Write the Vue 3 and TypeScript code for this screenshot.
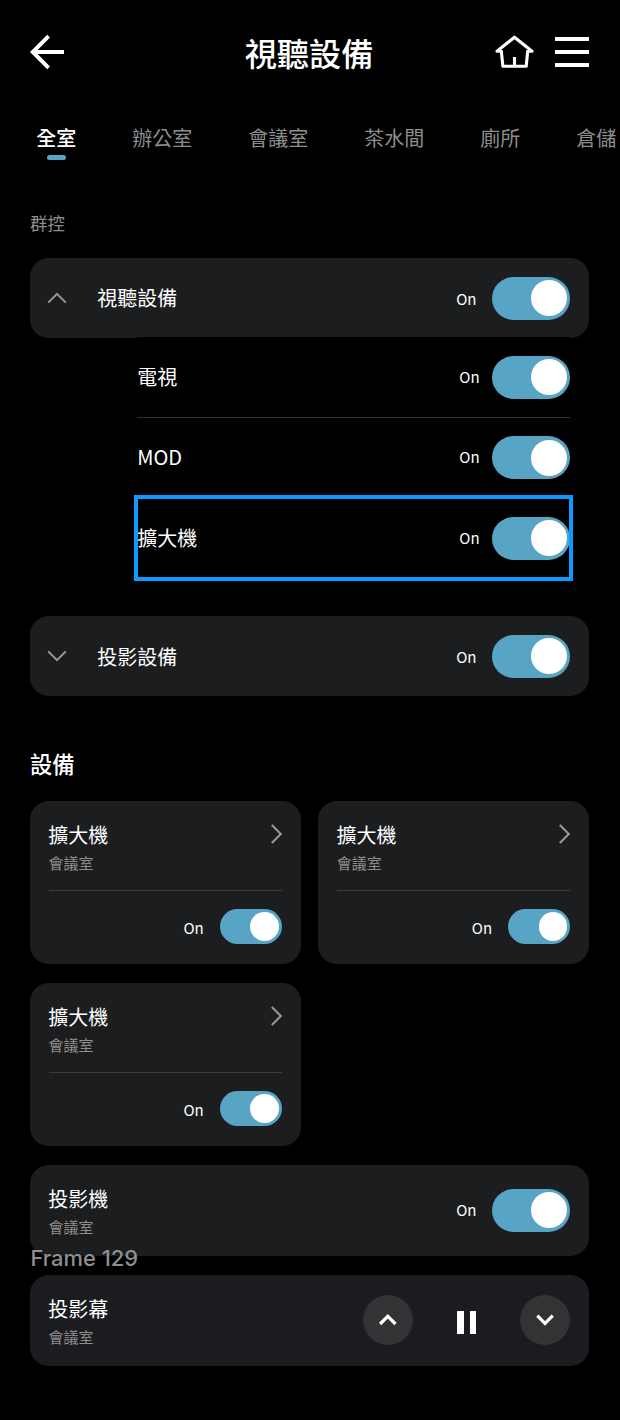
<script setup lang="ts">
import { ref } from 'vue'

interface Switchable {
  id: string
  name: string
  room?: string
  on: boolean
}

const tabs = ['全室', '辦公室', '會議室', '茶水間', '廁所', '倉儲']
const activeTab = ref(0)

const group = ref<Switchable>({ id: 'av', name: '視聽設備', on: true })
const members = ref<Switchable[]>([
  { id: 'tv', name: '電視', on: true },
  { id: 'mod', name: 'MOD', on: true },
  { id: 'amp', name: '擴大機', on: true },
])
const selectedMember = ref('amp')
const projection = ref<Switchable>({ id: 'projection', name: '投影設備', on: true })

const devices = ref<Switchable[]>([
  { id: 'amp-1', name: '擴大機', room: '會議室', on: true },
  { id: 'amp-2', name: '擴大機', room: '會議室', on: true },
  { id: 'amp-3', name: '擴大機', room: '會議室', on: true },
])
const projector = ref<Switchable>({ id: 'projector', name: '投影機', room: '會議室', on: true })

const label = (item: Switchable) => (item.on ? 'On' : 'Off')
</script>

<template>
  <main class="page">
    <header class="top">
      <svg class="back" width="34" height="36" viewBox="0 0 34 36">
        <path d="M34 18H3M18.6 2.2L2.8 18L18.6 33.8" />
      </svg>
      <h1>視聽設備</h1>
      <div class="actions">
        <svg class="home" width="41" height="36" viewBox="0 0 41 36">
          <path d="M3 17.2L20.5 3.2L38 17.2H33.7L32.2 32.3H8.9L7.3 17.2ZM20.5 23V31" />
        </svg>
        <div class="menu"><i></i><i></i><i></i></div>
      </div>
    </header>

    <nav class="tabs">
      <span
        v-for="(tab, i) in tabs"
        :key="tab"
        class="tab"
        :class="{ active: i === activeTab }"
        @click="activeTab = i"
      >{{ tab }}</span>
    </nav>

    <h3 class="caption">群控</h3>

    <section class="group">
      <div class="bar">
        <svg class="fold" width="20" height="12" viewBox="0 0 20 12"><path d="M1.2 10.6L10 1.8L18.8 10.6" /></svg>
        <span class="name">{{ group.name }}</span>
        <span class="state">{{ label(group) }}</span>
        <button class="switch" :class="{ off: !group.on }" @click="group.on = !group.on"></button>
      </div>
      <ul class="members">
        <li v-for="m in members" :key="m.id" :class="{ selected: m.id === selectedMember }">
          <span class="name">{{ m.name }}</span>
          <span class="state">{{ label(m) }}</span>
          <button class="switch" :class="{ off: !m.on }" @click="m.on = !m.on"></button>
        </li>
      </ul>
    </section>

    <section class="bar projection">
      <svg class="fold" width="20" height="12" viewBox="0 0 20 12"><path d="M1.2 1.4L10 10.2L18.8 1.4" /></svg>
      <span class="name">{{ projection.name }}</span>
      <span class="state">{{ label(projection) }}</span>
      <button class="switch" :class="{ off: !projection.on }" @click="projection.on = !projection.on"></button>
    </section>

    <h2>設備</h2>

    <section class="devices">
      <article v-for="d in devices" :key="d.id" class="card">
        <div class="card-head">
          <div class="info">
            <span class="name">{{ d.name }}</span>
            <span class="room">{{ d.room }}</span>
          </div>
          <svg class="more" width="12" height="20" viewBox="0 0 12 20"><path d="M1.8 1L10.8 10L1.8 19" /></svg>
        </div>
        <div class="card-foot">
          <span class="state">{{ label(d) }}</span>
          <button class="switch small" :class="{ off: !d.on }" @click="d.on = !d.on"></button>
        </div>
      </article>

      <article class="card wide">
        <div class="info">
          <span class="name">{{ projector.name }}</span>
          <span class="room">{{ projector.room }}</span>
        </div>
        <span class="state">{{ label(projector) }}</span>
        <button class="switch" :class="{ off: !projector.on }" @click="projector.on = !projector.on"></button>
      </article>

      <article class="card wide screen">
        <span class="frame-label">Frame 129</span>
        <div class="info">
          <span class="name">投影幕</span>
          <span class="room">會議室</span>
        </div>
        <div class="controls">
          <button class="round">
            <svg width="20" height="14" viewBox="0 0 20 14"><path d="M2.1 11L9.8 3.3L17.5 11" /></svg>
          </button>
          <div class="pause"><i></i><i></i></div>
          <button class="round">
            <svg width="20" height="14" viewBox="0 0 20 14"><path d="M2.3 2.7L10 10.4L17.7 2.7" /></svg>
          </button>
        </div>
      </article>
    </section>
  </main>
</template>

<style>
body {
  background: #000;
}
</style>

<style scoped>
* {
  box-sizing: border-box;
}

.page {
  width: 620px;
  height: 1420px;
  overflow: hidden;
  padding: 0 31px 0 30px;
  background: #000;
  color: #fff;
  font-family: "Noto Sans CJK TC", sans-serif;
}

h1, h2, h3, ul {
  margin: 0;
  padding: 0;
}

svg {
  display: block;
  flex: none;
  fill: none;
}

button {
  border: 0;
  padding: 0;
  flex: none;
}

.top {
  height: 104px;
  display: grid;
  grid-template-columns: 1fr auto 1fr;
  align-items: center;
}

.top h1 {
  margin-right: 1px;
  font-size: 32.2px;
  font-weight: 500;
  line-height: 48px;
}

.back {
  stroke: #fff;
  stroke-width: 4;
}

.actions {
  display: flex;
  justify-content: flex-end;
  align-items: center;
  gap: 19.5px;
}

.home {
  stroke: #fff;
  stroke-width: 3.1;
  stroke-linejoin: round;
}

.menu {
  width: 34.4px;
  height: 30.2px;
  display: flex;
  flex-direction: column;
  justify-content: space-between;
}

.menu i {
  height: 3.8px;
  background: #fff;
}

.tabs {
  height: 56px;
  margin-right: -31px;
  padding: 19px 0 0 6.3px;
  display: flex;
  gap: 56px;
  overflow: hidden;
  white-space: nowrap;
}

.tab {
  flex: none;
  height: 37px;
  font-size: 20px;
  line-height: 30px;
  color: #8e8e8e;
}

.tab.active {
  color: #fff;
  font-weight: 500;
}

.tab.active::after {
  content: "";
  display: block;
  width: 18.6px;
  height: 5px;
  margin: 1.5px auto 0;
  border-radius: 2.5px;
  background: #58a4c4;
}

.caption {
  height: 98px;
  padding-top: 49px;
  font-size: 17.4px;
  line-height: 27px;
  font-weight: 400;
  color: #8e8e8e;
}

.bar {
  height: 80.3px;
  padding: 0 18.7px 0 17px;
  display: flex;
  align-items: center;
  border-radius: 18.7px;
  background: #1c1d1f;
}

.fold {
  stroke: #999;
  stroke-width: 2;
}

.name {
  font-size: 20px;
  line-height: 30px;
  white-space: nowrap;
}

.bar .name {
  margin-left: 30.3px;
}

.state {
  margin-left: auto;
  margin-right: 15.9px;
  font-size: 15px;
  line-height: 22px;
}

.bar .state,
.projection .name {
  padding-top: 2px;
}

.switch {
  width: 78px;
  height: 43px;
  padding: 0 3.2px;
  display: flex;
  align-items: center;
  justify-content: flex-end;
  border-radius: 22px;
  background: #58a4c4;
}

.switch::after {
  content: "";
  width: 36px;
  height: 36px;
  border-radius: 50%;
  background: #fff;
}

.switch.small {
  width: 62.4px;
  height: 34.6px;
  padding: 0 2.9px;
}

.switch.small::after {
  width: 28.8px;
  height: 28.8px;
}

.switch.off {
  justify-content: flex-start;
  background: #555;
}

.group {
  height: 358px;
}

.members {
  margin: -1px 18.7px 0 106.7px;
  list-style: none;
  background: #000;
}

.members li {
  position: relative;
  height: 80.4px;
  display: flex;
  align-items: center;
}

.members li:first-child {
  box-shadow: inset 0 -1px #333;
}

.members .name {
  margin-left: 0.6px;
  margin-bottom: 1px;
}

.members .state {
  margin-right: 12.7px;
  margin-bottom: 1px;
}

.members .selected::after {
  content: "";
  position: absolute;
  inset: -2.9px -2.7px -3px -2.7px;
  border: 4px solid #0d99ff;
}

h2 {
  height: 104.3px;
  padding-top: 51px;
  font-size: 22.3px;
  line-height: 32px;
  font-weight: 500;
}

.devices {
  display: grid;
  grid-template-columns: 1fr 1fr;
  gap: 18.6px 17.6px;
}

.card {
  height: 163.5px;
  padding: 0 18.7px;
  border-radius: 18.7px;
  background: #1c1d1f;
}

.card-head {
  height: 90px;
  display: flex;
  justify-content: space-between;
  border-bottom: 1px solid #3b3c3e;
}

.info {
  padding-top: 19px;
  display: flex;
  flex-direction: column;
}

.info .name {
  margin-left: -0.4px;
}

.room {
  font-size: 15px;
  line-height: 22px;
  margin-top: 2px;
  margin-left: -0.3px;
  color: #8e8e8e;
}

.more {
  margin-top: 23.6px;
  stroke: #999;
  stroke-width: 2;
}

.card-foot {
  height: 72px;
  display: flex;
  align-items: center;
}

.card-foot .state {
  padding-top: 3px;
}

.wide {
  grid-column: 1 / -1;
  height: 91.2px;
  display: flex;
  align-items: center;
}

.wide .info {
  align-self: flex-start;
}

.screen {
  position: relative;
  background: #1b1c20;
}

.frame-label {
  position: absolute;
  left: 0.4px;
  top: -31px;
  font-family: Inter, sans-serif;
  font-size: 21.9px;
  font-weight: 500;
  line-height: 28px;
  color: #8f8f8f;
}

.controls {
  margin-left: auto;
  display: flex;
  align-items: center;
  gap: 44px;
}

.round {
  width: 50px;
  height: 50px;
  display: grid;
  place-items: center;
  border-radius: 50%;
  background: #323335;
}

.round svg {
  stroke: #fff;
  stroke-width: 3.2;
}

.pause {
  width: 19px;
  height: 22.4px;
  margin-top: 5px;
  display: flex;
  justify-content: space-between;
}

.pause i {
  width: 6.7px;
  background: #fff;
}
</style>
